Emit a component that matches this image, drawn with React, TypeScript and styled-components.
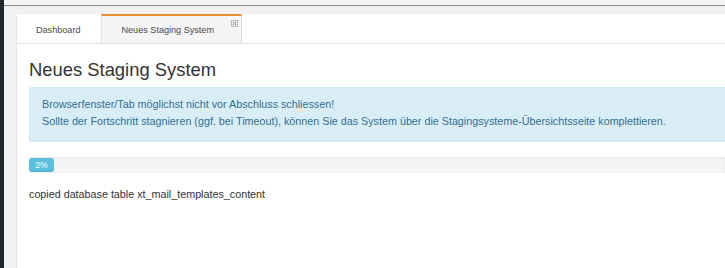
import styled, { createGlobalStyle } from "styled-components";

const Global = createGlobalStyle`
  html, body {
    margin: 0;
    padding: 0;
    height: 100%;
    overflow: hidden;
  }
  body {
    font-family: "Liberation Sans", Arial, sans-serif;
    color: #333;
  }
`;

const Page = styled.div`
  display: flex;
  height: 100vh;
`;

const SideStrip = styled.div`
  width: 4px;
  flex: none;
  background: #22272b;
`;

const Main = styled.div`
  flex: 1;
  display: flex;
  flex-direction: column;
  background: #f1f1f1;
  min-width: 0;
`;

const TopBar = styled.div`
  height: 5px;
  flex: none;
  background: #f3f3f3;
  border-bottom: 1px solid #8e8e8e;
`;

const Workspace = styled.div`
  flex: 1;
  display: flex;
  padding: 8px 0 0 12px;
`;

const Panel = styled.div`
  flex: 1;
  background: #fff;
  border-left: 1px solid #e6e6e6;
  border-top-left-radius: 4px;
  display: flex;
  flex-direction: column;
`;

const TabBar = styled.div`
  display: flex;
  height: 29px;
  border-bottom: 1px solid #e2e2e2;
`;

const Tab = styled.div<{ $active?: boolean }>`
  display: flex;
  align-items: center;
  box-sizing: border-box;
  height: 29px;
  padding: ${(p) => (p.$active ? "0 27px 0 20px" : "2px 20px 0 19px")};
  font-size: 9.1px;
  color: #4a4a4a;
  position: relative;
  background: ${(p) => (p.$active ? "#f5f5f5" : "#fff")};
  border-top: ${(p) => (p.$active ? "2px solid #e8913a" : "none")};
  border-left: ${(p) => (p.$active ? "1px solid #e4e4e4" : "none")};
  border-right: ${(p) => (p.$active ? "1px solid #dcdcdc" : "none")};
`;

const CloseBox = styled.span`
  position: absolute;
  top: 4px;
  right: 3px;
  width: 7px;
  height: 7px;
  display: flex;
`;

const Body = styled.div`
  padding: 0 0 0 12px;
  display: flex;
  flex-direction: column;
`;

const Heading = styled.h1`
  margin: 15px 0 6px;
  font-size: 18.4px;
  line-height: 22px;
  font-weight: 400;
  color: #333;
`;

const Alert = styled.div`
  background: #d9edf7;
  border: 1px solid #cde6f1;
  border-right: none;
  border-radius: 3px 0 0 3px;
  color: #31708f;
  font-size: 10.75px;
  line-height: 17.5px;
  padding: 7.5px 12px 10.5px;
  margin-bottom: 15px;
  white-space: nowrap;
`;

const Progress = styled.div`
  height: 16px;
  background: #f5f5f5;
  border-radius: 3px 0 0 3px;
  box-shadow: inset 0 1px 2px rgba(0, 0, 0, 0.08);
  display: flex;
`;

const ProgressBar = styled.div`
  min-width: 25px;
  background: #5bc0de;
  color: #fff;
  font-size: 8.5px;
  line-height: 15px;
  text-align: center;
  border-radius: 3px;
  margin: 1px 0;
  box-shadow: inset 0 -1px 0 rgba(0, 0, 0, 0.1);
`;

const LogLine = styled.div`
  margin-top: 12.5px;
  font-size: 10.75px;
  line-height: 17.5px;
  color: #333;
`;

const CloseIcon = () => (
  <svg width="7" height="7" viewBox="0 0 7 7">
    <rect x="0.5" y="0.5" width="6" height="6" fill="#e9e9e9" stroke="#b9b9b9" />
    <path d="M2 2 L5 5 M5 2 L2 5" stroke="#888" strokeWidth="1" />
  </svg>
);

const progress = 2;

export default function App() {
  return (
    <>
      <Global />
      <Page>
        <SideStrip />
        <Main>
          <TopBar />
          <Workspace>
            <Panel>
              <TabBar>
                <Tab>Dashboard</Tab>
                <Tab $active>
                  Neues Staging System
                  <CloseBox>
                    <CloseIcon />
                  </CloseBox>
                </Tab>
              </TabBar>
              <Body>
                <Heading>Neues Staging System</Heading>
                <Alert>
                  Browserfenster/Tab möglichst nicht vor Abschluss schliessen!
                  <br />
                  Sollte der Fortschritt stagnieren (ggf. bei Timeout), können
                  Sie das System über die Stagingsysteme-Übersichtsseite
                  komplettieren.
                </Alert>
                <Progress>
                  <ProgressBar style={{ width: `${progress}%` }}>
                    {progress}%
                  </ProgressBar>
                </Progress>
                <LogLine>copied database table xt_mail_templates_content</LogLine>
              </Body>
            </Panel>
          </Workspace>
        </Main>
      </Page>
    </>
  );
}
